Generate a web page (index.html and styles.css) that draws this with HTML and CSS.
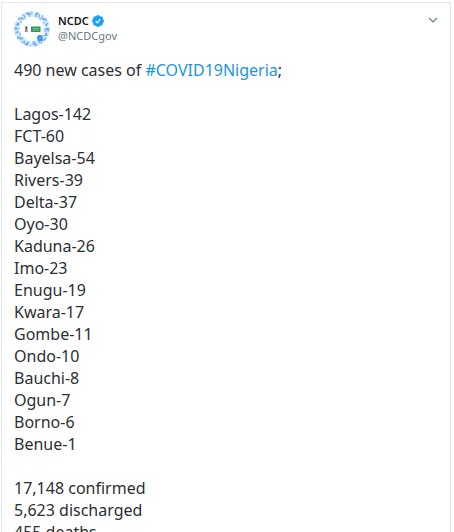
FILE: index.html
```html
<!DOCTYPE html>
<html lang="en">
<head>
    <meta charset="UTF-8">
    <title>NCDC</title>
    <link rel="stylesheet" href="styles.css">
</head>
<body>
<article class="tweet">
    <header class="tweet-header">
        <svg class="avatar" viewBox="0 0 36 36" aria-hidden="true">
            <circle cx="18" cy="18" r="17.5" fill="#fff" stroke="#e0edf7"/>
            <!-- ring of small icons -->
            <g fill="none">
                <circle cx="18" cy="18" r="14.8" stroke="#d3e8fb" stroke-width="5" stroke-dasharray="5 1 3 2 6 1"/>
                <circle cx="18" cy="18" r="16.4" stroke="#6db3f5" stroke-width="1.8" stroke-dasharray="2.5 3.4 1.2 2.2 3.6 1.9 1.4 4.1"/>
                <circle cx="18" cy="18" r="14.9" stroke="#5aa8f3" stroke-width="1.8" stroke-dasharray="1.5 2.6 3.1 4.3 2.1 1.7"/>
                <circle cx="18" cy="18" r="13.1" stroke="#8cc3f8" stroke-width="1.8" stroke-dasharray="2.8 3.7 1.3 5.1 1.9 2.3"/>
            </g>
            <path d="M11 16.5h2.6l-.4 1.5.9 2.8h-3.6l.9-2.8z" fill="#b5706c"/>
            <rect x="11.4" y="15.4" width="1.8" height="2.4" fill="#5d5552"/>
            <rect x="17" y="15.5" width="9.5" height="5.5" fill="#2c9b60"/>
            <path d="M18.5 17.5h6.5M18.5 19h6.5" stroke="#8cc9a6" stroke-width=".7"/>
            <circle cx="26" cy="27" r="2.9" fill="#2c93f2"/>
            <path d="M24.5 27l1 1 2-2" fill="none" stroke="#9fd0fb" stroke-width=".8"/>
        </svg>
        <div class="user">
            <div class="user-name">
                <a href="#">NCDC</a>
                <svg class="verified" viewBox="0 0 24 24" role="img" aria-label="Verified account">
                    <g fill="#1da1f2">
                        <circle cx="12" cy="12" r="9"/>
                        <circle cx="12" cy="4" r="4"/>
                        <circle cx="17.7" cy="6.3" r="4"/>
                        <circle cx="20" cy="12" r="4"/>
                        <circle cx="17.7" cy="17.7" r="4"/>
                        <circle cx="12" cy="20" r="4"/>
                        <circle cx="6.3" cy="17.7" r="4"/>
                        <circle cx="4" cy="12" r="4"/>
                        <circle cx="6.3" cy="6.3" r="4"/>
                    </g>
                    <path d="M7.5 12.5l3.2 3.2 5.6-7.4" fill="none" stroke="#fff" stroke-width="2.2"/>
                </svg>
            </div>
            <a class="user-handle" href="#">@NCDCgov</a>
        </div>
        <button class="more" type="button" aria-label="More">
            <svg viewBox="0 0 10 6" aria-hidden="true">
                <path d="M1 1l4 4 4-4" fill="none" stroke="#657786" stroke-width="1.1"/>
            </svg>
        </button>
    </header>

    <div class="tweet-text">
        <p>490 new cases of <a href="#">#COVID19Nigeria</a>;</p>
        <p>
            Lagos-142<br>
            FCT-60<br>
            Bayelsa-54<br>
            Rivers-39<br>
            Delta-37<br>
            Oyo-30<br>
            Kaduna-26<br>
            Imo-23<br>
            Enugu-19<br>
            Kwara-17<br>
            Gombe-11<br>
            Ondo-10<br>
            Bauchi-8<br>
            Ogun-7<br>
            Borno-6<br>
            Benue-1
        </p>
        <p>
            17,148 confirmed<br>
            5,623 discharged<br>
            455 deaths
        </p>
    </div>
</article>
</body>
</html>
```

FILE: styles.css
```css
* {
    box-sizing: border-box;
}

body {
    margin: 0;
    height: 100vh;
    overflow: hidden;
    background: #fff;
    color: #14171a;
    font-family: "Noto Sans", "Open Sans", sans-serif;
}

a {
    color: inherit;
    text-decoration: none;
}

.tweet {
    margin: 2px 3px 0 1px;
    padding: 8px 12px;
    border: 1px solid #e1e8ed;
}

.tweet-header {
    display: flex;
    align-items: flex-start;
}

.avatar {
    width: 36px;
    height: 36px;
}

.user {
    display: flex;
    flex: 1;
    flex-direction: column;
    align-items: flex-start;
    margin: 2px 0 0 8px;
    font-size: 11px;
    line-height: 15px;
}

.user-name {
    display: flex;
    align-items: center;
    gap: 3px;
    font-weight: 600;
}

.verified {
    width: 12px;
    height: 12px;
}

.user-handle {
    color: #697882;
}

.more {
    display: flex;
    margin-top: 6px;
    padding: 0;
    border: 0;
    background: none;
    cursor: pointer;
}

.more svg {
    width: 10px;
    height: 6px;
}

.tweet-text {
    margin-top: 12px;
    color: #2b2f33;
    font-size: 16px;
    line-height: 22px;
}

.tweet-text p {
    margin: 0 0 22px;
}

.tweet-text a {
    color: #1b95e0;
}
```
